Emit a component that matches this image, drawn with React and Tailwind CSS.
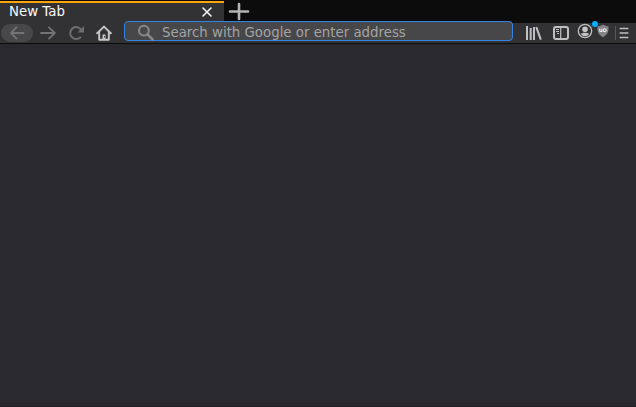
const ui = "font-['DejaVu_Sans',sans-serif]";

function TabStrip() {
  return (
    <div className="flex h-[23px] shrink-0 bg-[#0c0c0d] pt-px">
      <div className="flex h-[22px] w-[224px] items-start border-t-2 border-[#ffa40a] bg-[#323234] pr-[11px] pl-[9px]">
        <span className="flex-1 text-[13.33px] leading-[17px] text-[#f9f9fa]">New Tab</span>
        <svg className="mt-[3px]" width="12" height="12" viewBox="0 0 12 12" fill="none" stroke="#f4f4f5" strokeWidth="1.6" strokeLinecap="round">
          <path d="M2 2l8 8M10 2l-8 8" />
        </svg>
      </div>
      <svg className="ml-1" width="22" height="21" viewBox="0 0 22 21" fill="none" stroke="#b4b4b5" strokeWidth="2.6" strokeLinecap="round">
        <path d="M2 10.5h18M11 3v15" />
      </svg>
    </div>
  );
}

function Toolbar() {
  return (
    <div className="flex h-[20px] shrink-0 items-center bg-[#323234] pl-px">
      <button className="flex h-[18px] w-[32px] items-center justify-center rounded-full bg-[#48484a]">
        <svg width="16" height="16" viewBox="0 0 16 16" fill="none" stroke="#737375" strokeWidth="1.8" strokeLinecap="round" strokeLinejoin="round">
          <path d="M14.5 8H2M7.5 2.4L2 8l5.5 5.6" />
        </svg>
      </button>
      <svg className="ml-[7px] shrink-0" width="16" height="16" viewBox="0 0 16 16" fill="none" stroke="#737375" strokeWidth="1.8" strokeLinecap="round" strokeLinejoin="round">
        <path d="M1 8h13.5M9 2.4L14.8 8 9 13.6" />
      </svg>
      <svg className="ml-[12px] shrink-0" width="17" height="16" viewBox="0 0 17 16" fill="none" stroke="#6e6e70" strokeWidth="2">
        <path d="M13.4 5A6 6 0 1 0 12.4 12.4" strokeLinecap="round" />
        <path d="M16 1v6.500H9.500z" fill="#6e6e70" stroke="none" />
      </svg>
      <svg className="ml-[11px] shrink-0" width="16" height="16" viewBox="0 0 16 16" fill="none" stroke="#c8c8c9" strokeWidth="1.9" strokeLinecap="round" strokeLinejoin="round">
        <path d="M1.2 8.3L8 1.6l6.8 6.7" />
        <path d="M3.200 7.800v7h9.600v-7" />
        <path d="M6.500 9.500h3v5h-3z" fill="#c8c8c9" stroke="none" />
        <path d="M8.500 11v1.500" stroke="#4a4a4c" strokeWidth="1" strokeLinecap="butt" />
      </svg>
      <div className="-mt-1 ml-[12px] flex h-[20px] w-[389px] shrink-0 items-center rounded-[4px] border border-[#3584e4] bg-[#474749] pl-[12px]">
        <svg className="mt-[3px] shrink-0" width="17" height="17" viewBox="0 0 17 17" fill="none" stroke="#89898b" strokeWidth="2" strokeLinecap="round">
          <circle cx="6.9" cy="6.6" r="4.9" />
          <path d="M10.600 10.400l5 5" strokeWidth="2.400" />
        </svg>
        <span className="mt-[3px] ml-[8px] text-[13.33px] leading-[18px] whitespace-nowrap text-[#a3a3a4]">Search with Google or enter address</span>
      </div>
      <svg className="ml-[13px] shrink-0" width="16" height="16" viewBox="0 0 16 16" fill="none" stroke="#c0c0c1" strokeWidth="2">
        <path d="M1 1v14M4.7 3v12M8 2v13M10.3 2.2l4.5 12.5" />
      </svg>
      <svg className="ml-[11px] shrink-0" width="16" height="16" viewBox="0 0 16 16" fill="none" stroke="#c0c0c1">
        <rect x="1" y="2" width="14" height="12" rx="2" strokeWidth="2" />
        <path d="M7.700 2v12" strokeWidth="1.2" />
        <path d="M3 4.500h3M3 6.500h3M4 8.500h2" />
      </svg>
      <div className="relative ml-[8px] shrink-0">
        <svg className="-mt-1" width="16" height="16" viewBox="0 0 16 16">
          <circle cx="8" cy="8" r="6.7" fill="none" stroke="#bdbdbe" strokeWidth="1.3" />
          <circle cx="8" cy="6.3" r="2.8" fill="#c4c4c5" />
          <path d="M3.5 10.6c2 0 2-.8 3-.8h3c1 0 1 .8 3 .8-1 1.7-2.6 2.6-4.5 2.6s-3.500-.9-4.500-2.600z" fill="#c4c4c5" />
        </svg>
        <span className="absolute -top-[6px] left-[15px] size-[6px] rounded-full bg-[#00adff]" />
      </div>
      <svg className="-mt-1 ml-[4px] shrink-0" width="12" height="14" viewBox="0 0 12 14">
        <path d="M6 .5C4.500 1.700 2.600 2.200.5 2.300 0 7.800 1.700 11.100 6 13.200 10.300 11.100 12 7.800 11.500 2.300 9.400 2.200 7.500 1.700 6 .5z" fill="#858587" />
        <path d="M2.700 4.700v1.500q0 1.300 1.200 1.300h1V4.700" fill="none" stroke="#f0f0f0" strokeWidth="1.100" />
        <circle cx="7.700" cy="6.200" r="1.400" fill="none" stroke="#f0f0f0" strokeWidth="1.100" />
      </svg>
      <span className="ml-[6px] h-[14px] w-px shrink-0 bg-[#565658]" />
      <svg className="ml-[3px] shrink-0" width="10" height="12" viewBox="0 0 10 12" stroke="#c0c0c1" strokeWidth="1.500" strokeLinecap="round">
        <path d="M1.200 1.500h7.600M1.200 6h7.600M1.200 10.500h7.600" />
      </svg>
    </div>
  );
}

export default function App() {
  return (
    <div className={`flex h-[407px] w-[636px] flex-col overflow-hidden bg-[#2a2a2e] ${ui}`}>
      <TabStrip />
      <Toolbar />
      <div className="h-px shrink-0 bg-[#0c0c0d]" />
      <main className="flex-1 border-b border-[#202023]" />
    </div>
  );
}
